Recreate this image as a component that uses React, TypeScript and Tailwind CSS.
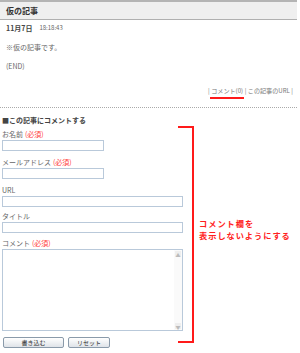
const font = { fontFamily: '"Noto Sans CJK JP", "Noto Sans", sans-serif' };

function Field({ label, required, width }: { label: string; required?: boolean; width: string }) {
  return (
    <div>
      <div className="h-[10px] text-[7px] leading-[10px] text-[#666]">
        {label}
        {required && <span className="ml-[2px] text-[#ff3b3b]">(必須)</span>}
      </div>
      <div className={`mt-[1px] h-[11px] ${width} border border-[#b9c9da] bg-white`} />
    </div>
  );
}

export default function App() {
  return (
    <div style={font} className="relative h-[353px] w-[300px] overflow-hidden bg-white">
      <div className="w-[297px]">
        {/* header */}
        <div className="h-[20px] border-t-2 border-b border-t-[#b4b4b4] border-b-[#b0b0b0] border-b-dotted bg-[#efefef] pl-[6px] text-[8px] font-bold leading-[17px] text-[#333]">
          仮の記事
        </div>

        <div className="pl-[6px]">
          <div className="mt-[3px] flex h-[10px] items-center gap-[7px] text-[7px] leading-[10px] text-[#444]">
            <span className="font-bold">11月7日</span>
            <span className="text-[6px] text-[#666]">18:18:43</span>
          </div>
          <div className="mt-[9px] h-[10px] text-[7px] leading-[10px] text-[#666]">※仮の記事です。</div>
          <div className="mt-[9px] h-[10px] text-[7px] leading-[10px] text-[#666]">(END)</div>
        </div>

        <div className="mt-[15px] flex h-[10px] justify-end gap-[1.5px] pr-[4px] text-[6.1px] leading-[10px] text-[#777]">
          <span>|</span>
          <span className="relative">
            コメント(0)
            <span className="absolute -left-[1px] -right-[1px] top-[11px] h-[2px] bg-[#ff1a1a]" />
          </span>
          <span>|</span>
          <span>この記事のURL</span>
          <span>|</span>
        </div>

        <div className="mt-[11px] border-t border-dotted border-[#aaa]" />

        <div className="pl-[2px]">
          <div className="mt-[7px] h-[10px] text-[7px] font-bold leading-[10px] text-[#444]">■この記事にコメントする</div>
          <div className="mt-[4px]">
            <Field label="お名前" required width="w-[102px]" />
          </div>
          <div className="mt-[6px]">
            <Field label="メールアドレス" required width="w-[102px]" />
          </div>
          <div className="mt-[6px]">
            <Field label="URL" width="w-[181px]" />
          </div>
          <div className="mt-[4px]">
            <Field label="タイトル" width="w-[181px]" />
          </div>
          <div className="mt-[5px] h-[10px] text-[7px] leading-[10px] text-[#666]">
            コメント<span className="ml-[2px] text-[#ff3b3b]">(必須)</span>
          </div>
          <div className="mt-[1px] flex h-[82px] w-[181px] justify-end border border-[#b9c9da] bg-white">
            <div className="flex w-[8px] flex-col justify-between bg-[#fafafa] p-[1px]">
              <div className="flex h-[6px] items-center justify-center bg-[#eee] text-[5px] leading-none text-[#bbb]">▲</div>
              <div className="flex h-[6px] items-center justify-center bg-[#eee] text-[5px] leading-none text-[#bbb]">▼</div>
            </div>
          </div>
          <div className="mt-[6px] flex gap-[4px] pl-[1px]">
            <div className="flex h-[11px] w-[61px] items-center justify-center rounded-[2px] border border-[#8a9aaa] bg-gradient-to-b from-white to-[#dfe3e8] text-[6px] text-[#333]">
              書き込む
            </div>
            <div className="flex h-[11px] w-[42px] items-center justify-center rounded-[2px] border border-[#8a9aaa] bg-gradient-to-b from-white to-[#dfe3e8] text-[6px] text-[#333]">
              リセット
            </div>
          </div>
        </div>
      </div>

      {/* annotations */}
      <div className="absolute left-[178px] top-[126px] h-[217px] w-[16px] border-y-2 border-r-2 border-[#ff1a1a]" />
      <div className="absolute left-[199px] top-[217px] flex flex-col text-[8.2px] font-bold leading-[12px] tracking-[1px] text-[#ff2020]">
        <span>コメント欄を</span>
        <span>表示しないようにする</span>
      </div>
    </div>
  );
}
